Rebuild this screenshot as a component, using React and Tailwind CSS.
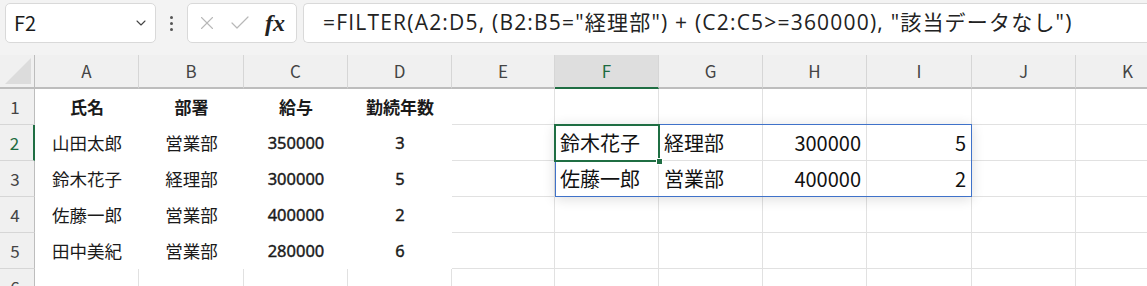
import { ChevronDown, X, Check } from 'lucide-react';

const cols = ['A', 'B', 'C', 'D', 'E', 'F', 'G', 'H', 'I', 'J', 'K'];

const tableRows = [
  ['氏名', '部署', '給与', '勤続年数'],
  ['山田太郎', '営業部', '350000', '3'],
  ['鈴木花子', '経理部', '300000', '5'],
  ['佐藤一郎', '営業部', '400000', '2'],
  ['田中美紀', '営業部', '280000', '6'],
];

const spill = {
  2: ['鈴木花子', '経理部', '300000', '5'],
  3: ['佐藤一郎', '営業部', '400000', '2'],
};

function Cell({ row, col }) {
  const ci = cols.indexOf(col);
  // A1:D5 has a white fill, so gridlines are hidden there
  if (ci < 4 && row <= 5) {
    const text = tableRows[row - 1][ci];
    const isNum = /^\d+$/.test(text);
    return (
      <div
        className={`flex items-center justify-center bg-white text-[#1a1a1a] ${row === 1 ? 'font-bold text-[17px]' : isNum ? 'text-[16.5px] font-["Noto_Sans",sans-serif] [-webkit-text-stroke:0.4px_#1a1a1a]' : 'text-[17.5px]'}`}
      >
        {text}
      </div>
    );
  }
  const s = spill[row];
  let content = null;
  let align = 'justify-start pl-[5px]';
  if (s && ci >= 5 && ci <= 8) {
    content = s[ci - 5];
    if (ci >= 7) align = 'justify-end pr-[5px]';
  }
  return (
    <div className={`flex items-center border-r border-b border-[#e1e1e1] bg-white text-[20px] text-[#111] ${align}`}>
      {content}
    </div>
  );
}

function Toolbar() {
  return (
    <div className="flex items-start h-[55px] bg-[#f3f3f3] pt-[3px] pl-[5px] gap-0">
      <div className="flex items-center justify-between w-[151px] h-[40px] bg-white border border-[#d9d9d9] rounded-[5px] pl-[8px] pr-[6px]">
        <span className="text-[20px] text-[#1a1a1a]">F2</span>
        <ChevronDown size={16} strokeWidth={1.6} className="text-[#444]" />
      </div>
      <div className="flex flex-col items-center justify-center gap-[3px] w-[31px] h-[40px]">
        <span className="w-[3px] h-[3px] rounded-full bg-[#555]" />
        <span className="w-[3px] h-[3px] rounded-full bg-[#555]" />
        <span className="w-[3px] h-[3px] rounded-full bg-[#555]" />
      </div>
      <div className="flex items-center w-[110px] h-[40px] bg-white border border-[#d9d9d9] rounded-[5px] pl-[8px] gap-[10px]">
        <X size={22} strokeWidth={1.2} className="text-[#b8b8b8]" />
        <Check size={24} strokeWidth={1.2} className="text-[#b8b8b8]" />
        <span className="ml-[3px] italic font-semibold text-[24px] leading-none font-['Liberation_Serif',serif] text-[#222]">fx</span>
      </div>
      <div className="flex items-center flex-1 h-[40px] ml-[6px] bg-white border border-r-0 border-[#d9d9d9] rounded-l-[5px] pl-[19px] text-[21px] tracking-[1.2px] text-[#222] whitespace-nowrap font-['Open_Sans','Noto_Sans_CJK_JP',sans-serif]">
        {'=FILTER(A2:D5, (B2:B5="経理部") + (C2:C5>=360000), "該当データなし")'}
      </div>
    </div>
  );
}

function Sheet() {
  const rows = [1, 2, 3, 4, 5, 6];
  return (
    <div className="relative">
      <div className="grid grid-cols-[35px_104px_105px_104px_104px_103px_104px_104px_104px_105px_104px_104px] grid-rows-[34px_repeat(6,36px)]">
        {/* corner */}
        <div className="relative bg-[#f0f0f0] border-r border-b-2 border-[#bdbdbd]">
          <svg className="absolute right-[3px] bottom-[3px]" width="26" height="26" viewBox="0 0 26 26">
            <polygon points="26,0 26,26 0,26" fill="#dcdcdc" />
          </svg>
        </div>
        {cols.map((c) => (
          <div
            key={c}
            className={`flex items-center justify-center text-[17px] border-r border-[#d6d6d6] ${c === 'F' ? 'bg-[#dedede] text-[#1d6b40] border-b-2 border-b-[#1f6e43]' : 'bg-[#f0f0f0] text-[#444] border-b-2 border-b-[#bdbdbd]'}`}
          >
            {c}
          </div>
        ))}
        {rows.map((r) => [
          <div
            key={`h${r}`}
            className={`flex items-center justify-center pr-[4px] text-[17px] bg-[#f0f0f0] border-b border-[#d6d6d6] ${r === 2 ? 'text-[#1d6b40] border-r-2 border-r-[#1f6e43]' : 'text-[#444] border-r border-r-[#bdbdbd]'}`}
          >
            {r}
          </div>,
          ...cols.map((c) => <Cell key={`${c}${r}`} row={r} col={c} />),
        ])}
      </div>

      {/* spill range outline */}
      <div className="absolute left-[555px] top-[69px] w-[417px] h-[73px] border border-[#3f72c9] shadow-[0_2px_12px_rgba(0,0,0,0.14)] pointer-events-none" />
      {/* active cell F2 */}
      <div className="absolute left-[554px] top-[69px] w-[106px] h-[38px] border-2 border-[#1f6e43] pointer-events-none" />
      <div className="absolute left-[656px] top-[103px] w-[7px] h-[7px] bg-[#1f6e43] border border-white pointer-events-none" />
    </div>
  );
}

export default function App() {
  return (
    <div className="w-[1147px] h-[286px] overflow-hidden bg-white font-['Noto_Sans_CJK_JP',sans-serif]">
      <Toolbar />
      <Sheet />
    </div>
  );
}
